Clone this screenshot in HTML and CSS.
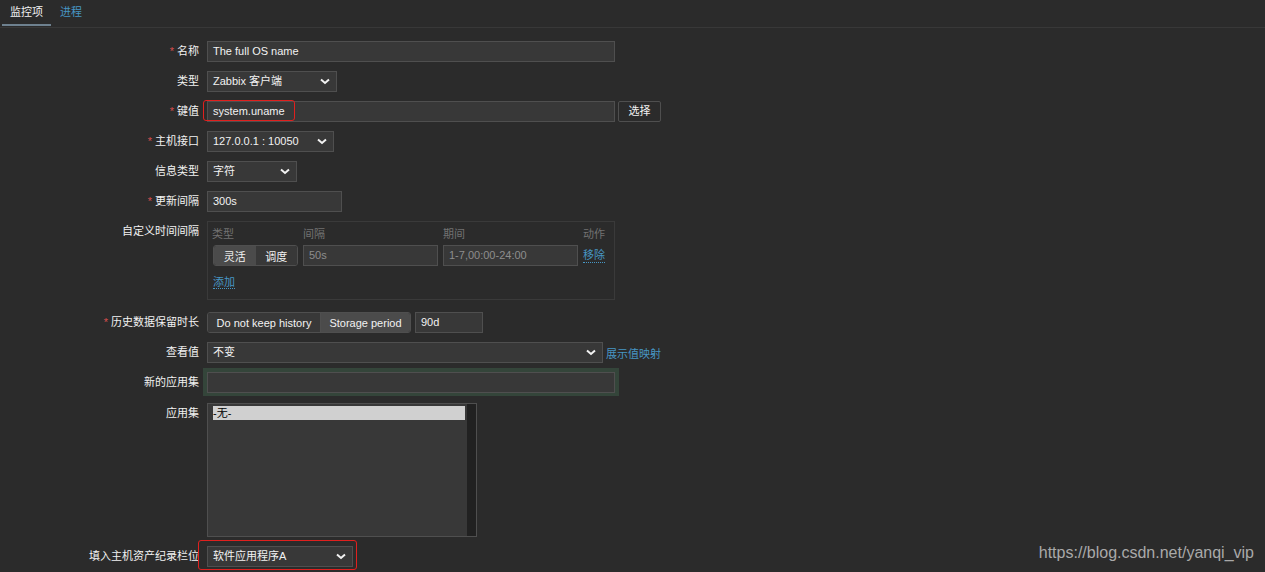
FILE: index.html
```html
<!DOCTYPE html>
<html lang="zh">
<head>
<meta charset="utf-8">
<title>监控项</title>
<link rel="stylesheet" href="styles.css">
</head>
<body>
<div class="tabs">
  <span class="tab active">监控项</span>
  <span class="tab link">进程</span>
</div>
<div class="form">
  <div class="row">
    <div class="lbl"><span class="ast">*</span>名称</div>
    <div class="field"><div class="inp w408">The full OS name</div></div>
  </div>
  <div class="row">
    <div class="lbl">类型</div>
    <div class="field"><div class="sel w130"><span>Zabbix 客户端</span><svg class="chev" width="10" height="7" viewBox="0 0 10 7"><path d="M1 1.5 L5 5 L9 1.5" fill="none" stroke="#f2f2f2" stroke-width="2"/></svg></div></div>
  </div>
  <div class="row">
    <div class="lbl"><span class="ast">*</span>键值</div>
    <div class="field field-key">
      <div class="inp w408 keyinp">system.uname<span class="mark mark-key"></span></div>
      <div class="btn">选择</div>
    </div>
  </div>
  <div class="row">
    <div class="lbl"><span class="ast">*</span>主机接口</div>
    <div class="field"><div class="sel w127"><span>127.0.0.1 : 10050</span><svg class="chev" width="10" height="7" viewBox="0 0 10 7"><path d="M1 1.5 L5 5 L9 1.5" fill="none" stroke="#f2f2f2" stroke-width="2"/></svg></div></div>
  </div>
  <div class="row">
    <div class="lbl">信息类型</div>
    <div class="field"><div class="sel w90"><span>字符</span><svg class="chev" width="10" height="7" viewBox="0 0 10 7"><path d="M1 1.5 L5 5 L9 1.5" fill="none" stroke="#f2f2f2" stroke-width="2"/></svg></div></div>
  </div>
  <div class="row">
    <div class="lbl"><span class="ast">*</span>更新间隔</div>
    <div class="field"><div class="inp w135">300s</div></div>
  </div>
  <div class="row row-interval">
    <div class="lbl">自定义时间间隔</div>
    <div class="field">
      <div class="ibox">
        <div class="igrid">
          <div class="ih">类型</div>
          <div class="ih">间隔</div>
          <div class="ih">期间</div>
          <div class="ih">动作</div>
          <div class="seg seg-small"><span class="segb on">灵活</span><span class="segb">调度</span></div>
          <div class="inp dim">50s</div>
          <div class="inp dim">1-7,00:00-24:00</div>
          <div class="act"><span class="dlink">移除</span></div>
        </div>
        <div class="add"><span class="dlink">添加</span></div>
      </div>
    </div>
  </div>
  <div class="row row-hist">
    <div class="lbl"><span class="ast">*</span>历史数据保留时长</div>
    <div class="field">
      <div class="seg"><span class="segb hb1">Do not keep history</span><span class="segb hb2 on">Storage period</span></div>
      <div class="inp w68">90d</div>
    </div>
  </div>
  <div class="row row-view">
    <div class="lbl">查看值</div>
    <div class="field">
      <div class="sel w396"><span>不变</span><svg class="chev" width="10" height="7" viewBox="0 0 10 7"><path d="M1 1.5 L5 5 L9 1.5" fill="none" stroke="#f2f2f2" stroke-width="2"/></svg></div>
      <span class="link vlink">展示值映射</span>
    </div>
  </div>
  <div class="row row-newapp">
    <div class="lbl">新的应用集</div>
    <div class="field"><div class="green"><div class="inp w408"></div></div></div>
  </div>
  <div class="row row-apps">
    <div class="lbl">应用集</div>
    <div class="field">
      <div class="listbox">
        <div class="items"><div class="item sel-item">-无-</div></div>
        <div class="scroll"></div>
      </div>
    </div>
  </div>
  <div class="row row-inv">
    <div class="lbl">填入主机资产纪录栏位</div>
    <div class="field">
      <div class="sel w146 invsel"><span>软件应用程序A</span><svg class="chev" width="10" height="7" viewBox="0 0 10 7"><path d="M1 1.5 L5 5 L9 1.5" fill="none" stroke="#f2f2f2" stroke-width="2"/></svg><span class="mark mark-inv"></span></div>
    </div>
  </div>
</div>
<div class="watermark">https://blog.csdn.net/yanqi_vip</div>
</body>
</html>
```
FILE: styles.css
```css
html, body {
  margin: 0;
  padding: 0;
  background: #2b2b2b;
  height: 100%;
  overflow: hidden;
}
body {
  font-family: "Liberation Sans", "Noto Sans CJK SC", sans-serif;
  font-size: 11px;
  color: #f2f2f2;
  position: relative;
}
.tabs {
  display: flex;
  height: 27px;
  border-bottom: 1px solid #383838;
  padding-left: 2px;
}
.tab {
  display: flex;
  align-items: center;
  height: 24px;
  padding: 0 8px;
  margin-right: 1px;
  border-bottom: 2px solid transparent;
  line-height: 24px;
}
.tab.active {
  border-bottom-color: #6e818f;
  color: #f2f2f2;
}
.link, .tab.link { color: #4796c4; }
.form {
  padding-top: 13px;
  display: flex;
  flex-direction: column;
}
.row {
  display: flex;
  align-items: flex-start;
  margin-bottom: 9px;
}
.lbl {
  width: 207px;
  padding-right: 8px;
  box-sizing: border-box;
  text-align: right;
  line-height: 21px;
  height: 21px;
  white-space: nowrap;
}
.ast {
  color: #d64e4e;
  margin-right: 3px;
}
.field {
  display: flex;
  align-items: center;
  gap: 4px;
}
.field-key { gap: 3px; }
.inp, .sel {
  height: 21px;
  box-sizing: border-box;
  background: #383838;
  border: 1px solid #4f4f4f;
  padding: 0 5px;
  line-height: 19px;
  color: #f2f2f2;
  white-space: nowrap;
  position: relative;
}
.sel {
  display: flex;
  align-items: center;
  justify-content: space-between;
  padding-right: 6px;
}
.chev { flex: none; }
.w408 { width: 408px; }
.w130 { width: 130px; }
.w127 { width: 127px; }
.w90 { width: 90px; }
.w135 { width: 135px; }
.w68 { width: 68px; }
.w396 { width: 396px; }
.w146 { width: 146px; }
.btn {
  height: 21px;
  box-sizing: border-box;
  width: 43px;
  border: 1px solid #4f4f4f;
  border-radius: 2px;
  line-height: 19px;
  text-align: center;
  background: #2b2b2b;
}
.mark {
  position: absolute;
  border: 1.5px solid #e0201e;
  border-radius: 3px;
  pointer-events: none;
}
.mark-key {
  left: -5px;
  top: -2px;
  width: 90px;
  height: 19px;
}
.mark-inv {
  left: -10px;
  top: -7px;
  width: 157px;
  height: 28px;
}
.row-interval { margin-bottom: 12px; }
.ibox {
  width: 408px;
  height: 79px;
  box-sizing: border-box;
  border: 1px solid #3a3a3a;
  padding: 5px 5px 0 5px;
}
.igrid {
  display: grid;
  grid-template-columns: 85px 135px 135px auto;
  column-gap: 5px;
  row-gap: 4px;
}
.ih {
  color: #727272;
  line-height: 14px;
  height: 14px;
}
.ih:first-child { margin-left: -1px; }
.seg {
  display: flex;
  height: 21px;
  box-sizing: border-box;
  border: 1px solid #4f4f4f;
  border-radius: 3px;
  overflow: hidden;
}
.segb {
  display: flex;
  align-items: center;
  justify-content: center;
  background: #383838;
  color: #f2f2f2;
  height: 19px;
}
.segb.on { background: #4b4b4b; }
.seg-small { width: 85px; }
.seg-small .segb { flex: 1; }
.hb1 { width: 112px; border-right: 1px solid #4f4f4f; }
.hb2 { width: 89px; }
.dim { color: #8d8d8d; }
.act { display: flex; align-items: center; height: 21px; }
.dlink {
  color: #4796c4;
  border-bottom: 1px dotted #4796c4;
  line-height: 13px;
}
.add {
  margin-top: 9px;
  line-height: 14px;
}
.row-view { margin-bottom: 5px; }
.vlink { margin-left: -1px; }
.row-newapp { margin-bottom: 7px; }
.row-newapp .lbl { margin-top: 4px; }
.green {
  background: #34453a;
  padding: 4px 4px 3px 4px;
  margin-left: -4px;
}
.row-apps { margin-bottom: 9px; }
.listbox {
  width: 270px;
  height: 134px;
  box-sizing: border-box;
  background: #383838;
  border: 1px solid #4f4f4f;
  display: flex;
}
.items {
  flex: 1;
  padding: 2px 2px 0 5px;
}
.item {
  height: 14px;
  line-height: 14px;
}
.sel-item {
  background: #d0d0d0;
  color: #000;
}
.scroll {
  width: 9px;
  background: #212121;
}
.invsel { overflow: visible; }
.watermark {
  position: absolute;
  right: 11px;
  bottom: 10px;
  font-family: "Liberation Sans", sans-serif;
  font-size: 16px;
  color: #a9a9a9;
}
```
